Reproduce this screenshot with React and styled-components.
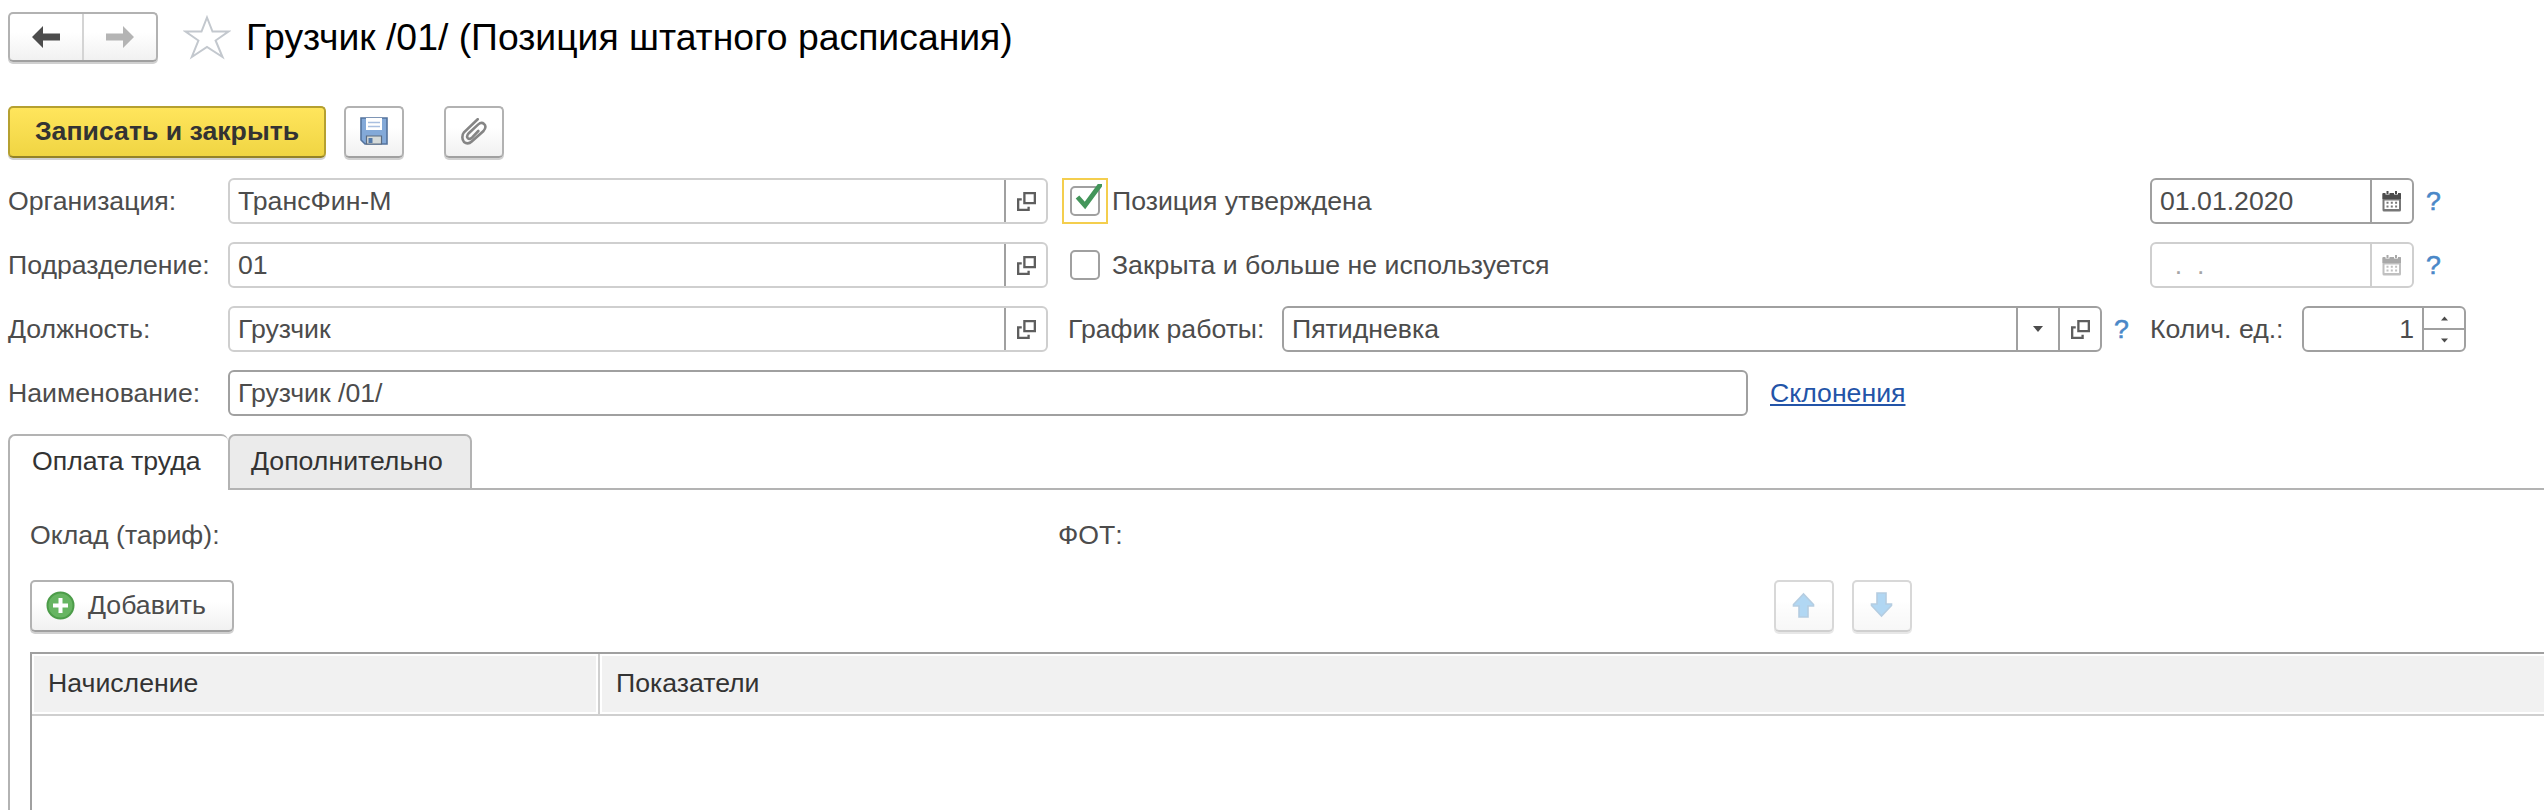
import React from 'react';
import styled, { createGlobalStyle, css } from 'styled-components';

const Global = createGlobalStyle`
  * { box-sizing: border-box; }
  body { margin: 0; background: #fff; overflow: hidden; }
`;

const Page = styled.div`
  width: 2544px;
  height: 810px;
  display: flex;
  flex-direction: column;
  padding: 12px 0 0 8px;
  overflow: hidden;
  font-family: 'Liberation Sans', Arial, sans-serif;
  font-size: 26.667px;
  line-height: 46px;
  color: #4c4c4c;
  white-space: nowrap;
`;

const TitleBar = styled.header`
  display: flex;
  height: 94px;
  align-items: flex-start;
`;

const raised = css`
  border: 2px solid #b2b2b2;
  border-bottom-color: #a0a0a0;
  border-radius: 5px;
  background: linear-gradient(#fff 40%, #f1f1f1);
  box-shadow: 0 2px 0 #d0d0d0;
`;

const NavGroup = styled.div`
  ${raised}
  display: flex;
  width: 150px;
  height: 50px;
`;

const NavButton = styled.button`
  flex: 1;
  display: flex;
  align-items: center;
  justify-content: center;
  border: 0;
  padding: 0;
  background: none;
  & + & { border-left: 2px solid #d4d4d4; }
`;

const StarBox = styled.div`
  display: flex;
  margin: 2px 0 0 25px;
`;

const Title = styled.h1`
  margin: 0 0 0 15px;
  font-size: 37.333px;
  line-height: 50px;
  font-weight: 400;
  color: #000;
`;

const Toolbar = styled.div`
  display: flex;
  height: 72px;
  align-items: flex-start;
`;

const Button = styled.button`
  ${raised}
  display: flex;
  align-items: center;
  justify-content: center;
  width: ${(p) => p.$w}px;
  height: 52px;
  margin: 0 0 0 ${(p) => p.$gap || 0}px;
  padding: 0 0 2px;
  font: inherit;
  color: inherit;
  opacity: ${(p) => (p.$disabled ? 0.5 : 1)};
`;

const PrimaryButton = styled(Button)`
  border-color: #b5a030;
  border-bottom-color: #938228;
  background: linear-gradient(#ffe55c, #f0d543);
  font-weight: 700;
  color: #333;
`;

const AddButton = styled(Button)`
  justify-content: flex-start;
  gap: 13px;
  padding-left: 14px;
`;

const Form = styled.div`
  display: flex;
  flex-direction: column;
  gap: 18px;
  height: 256px;
`;

const Row = styled.div`
  display: flex;
  height: 46px;
`;

const Label = styled.label`
  width: ${(p) => p.$w}px;
  height: 46px;
  flex: none;
`;

const ScheduleLabel = styled(Label)`
  margin-left: 20px;
`;

const Field = styled.div`
  display: flex;
  flex: none;
  width: ${(p) => p.$w}px;
  height: 46px;
  border: 2px solid ${(p) => (p.$light ? '#cfcfcf' : '#a0a0a0')};
  border-radius: 6px;
`;

const Value = styled.div`
  flex: 1;
  padding: 0 8px;
  line-height: 42px;
  text-align: ${(p) => p.$align || 'left'};
  color: ${(p) => (p.$muted ? '#a5a5a5' : '#4c4c4c')};
  white-space: pre;
`;

const FieldButton = styled.div`
  display: flex;
  align-items: center;
  justify-content: center;
  width: 42px;
  border-left: 2px solid ${(p) => (p.$light ? '#cfcfcf' : '#a0a0a0')};
  color: ${(p) => (p.$light ? '#a8a8a8' : '#4c4c4c')};
`;

const Spinner = styled(FieldButton)`
  flex-direction: column;
  align-items: stretch;
`;

const SpinStep = styled.div`
  flex: 1;
  display: flex;
  align-items: center;
  justify-content: center;
  & + & { border-top: 2px solid #a0a0a0; }
`;

const CheckFrame = styled.div`
  display: flex;
  width: 46px;
  height: 46px;
  margin-left: 14px;
  padding: 6px;
  border: 2px solid ${(p) => (p.$focused ? '#f4ce4e' : 'transparent')};
`;

const CheckBox = styled.div`
  display: flex;
  width: 30px;
  height: 30px;
  border: 2px solid #a0a0a0;
  border-radius: 5px;
`;

const CheckSvg = styled.svg`
  flex: none;
  margin: -4px 0 0 2px;
`;

const CheckLabel = styled.label`
  width: 1042px;
  padding-left: 4px;
`;

const Help = styled.span`
  width: 48px;
  padding-left: 12px;
  color: #4a88c8;
  -webkit-text-stroke: 0.6px #4a88c8;
`;

const Link = styled.a`
  margin-left: 22px;
  color: #2354a8;
  text-decoration: underline;
  text-decoration-thickness: 2px;
  text-underline-offset: 2px;
`;

const Tabs = styled.nav`
  display: flex;
  height: 56px;
  color: #333;
  line-height: 50px;
`;

const Tab = styled.div`
  width: ${(p) => p.$w}px;
  padding-left: ${(p) => p.$pad}px;
  border: 2px solid #b3b3b3;
  border-radius: 7px 7px 0 0;
  background: ${(p) => (p.$active ? '#fff' : '#ebebeb')};
  ${(p) => p.$active && css`border-right: 0; border-bottom: 0;`}
`;

const TabRest = styled.div`
  flex: 1;
  border-bottom: 2px solid #b3b3b3;
`;

const Panel = styled.section`
  flex: 1;
  display: flex;
  flex-direction: column;
  border-left: 2px solid #b3b3b3;
  padding: 22px 0 0 20px;
`;

const Totals = styled.div`
  display: flex;
  height: 68px;
`;

const Commands = styled.div`
  display: flex;
  height: 72px;
`;

const Table = styled.div`
  flex: 1;
  border: solid #a0a0a0;
  border-width: 2px 0 0 2px;
  color: #333;
`;

const HeadRow = styled.div`
  display: flex;
  height: 62px;
  border-bottom: 2px solid #cfcfcf;
`;

const HeadCell = styled.div`
  width: ${(p) => p.$w}px;
  padding-left: 14px;
  line-height: 54px;
  border: 2px solid #fff;
  background: #f1f1f1;
`;

const HeadDivider = styled.div`
  width: 2px;
  background: #cfcfcf;
`;

const LastHeadCell = styled(HeadCell)`
  flex: 1;
  border-right: 0;
`;

const Arrow = ({ color, flip }) => (
  <svg width="28" height="22" viewBox="0 0 28 22">
    <path d={flip ? 'M28 11 17 0v7.5H0v7h17V22z' : 'M0 11 11 0v7.5h17v7H11V22z'} fill={color} />
  </svg>
);

const Star = () => (
  <svg width="48" height="46" viewBox="0 0 48 46">
    <path d="M24 3.500 29.500 17.500H45.500L32.600 26.500 39.500 43 24 33 8.800 43 15.400 26.500 2.500 17.500H18.500z" fill="none" stroke="#c3c8ce" strokeWidth="2" />
  </svg>
);

const Floppy = () => (
  <svg width="28" height="28" viewBox="0 0 28 28">
    <path d="M1 1h26v26H5l-4-4z" fill="#83a9d8" stroke="#54739d" strokeWidth="1.6" />
    <path d="M6 1h16v12H6z" fill="#fff" />
    <path d="M8 5.5h12M8 9.5h12" stroke="#a9bfe0" strokeWidth="1.5" />
    <path d="M6.500 19h15v8h-15z" fill="#d5dad9" stroke="#5c6c80" strokeWidth="1.2" />
    <path d="M8.5 21h4v5h-4z" fill="#5379a9" />
  </svg>
);

const Clip = () => (
  <svg width="26" height="27" viewBox="0 0 26 27" fill="none" stroke="#858585" strokeWidth="2.600" strokeLinecap="round">
    <path d="M16.700 1.200 3 14.300C.8 17 .8 21.500 3 24c2.500 2 5.500 1.600 8-.8L22.500 13c2.500-2.800 2.400-5.500.6-7-1.800-1.600-4.300-1-6.100.6L7.800 15.200c-1.900 2-1.900 4-.9 5 1.200 1.100 2.900.6 4.300-.8L17.300 13" />
  </svg>
);

const OpenIcon = () => (
  <svg width="19" height="19" viewBox="0 0 18 18" fill="none" stroke="#5e5e5e" strokeWidth="2.200">
    <path d="M7 1.100h9.900v9.400H7zM4.500 7H1.100v9.900h9.900v-3" />
  </svg>
);

const CalendarIcon = ({ muted }) => (
  <svg width="20" height="22" viewBox="0 0 20 22">
    <path d="M1.500 3h16.500q1 0 1 1v16q0 1.500-1.500 1.500H2q-1.500 0-1.500-1.500V4q0-1 1-1z" fill={muted ? '#c0c0c0' : '#777'} />
    <path d="M.5 9V4q0-1 1-1H18q1 0 1 1v5z" fill="currentColor" />
    <path d="M2.500 10.500h14.500v8.500H2.500z" fill="#fff" />
    <path d="M4.500 12.800h11M4.500 16.500h11" stroke={muted ? '#c0c0c0' : '#777'} strokeWidth="2" strokeDasharray="2 2.300" />
    <path d="M5.500 0v4.500M14 0v4.500" stroke="#fff" strokeWidth="4" />
    <path d="M5.500 1v3M14 1v3" stroke="currentColor" strokeWidth="2" />
  </svg>
);

const Triangle = ({ w, h, up }) => (
  <svg width={w} height={h} viewBox="0 0 10 6">
    <path d={up ? 'M0 6 5 0l5 6z' : 'M0 0h10L5 6z'} fill="#4c4c4c" />
  </svg>
);

const Plus = () => (
  <svg width="29" height="29" viewBox="0 0 29 29">
    <circle cx="14.500" cy="14.500" r="13" fill="#67b562" stroke="#4c9c49" strokeWidth="2" />
    <path d="M14.500 7v15M7 14.500h15" stroke="#fff" strokeWidth="4" />
  </svg>
);

const BlueArrow = ({ down }) => (
  <svg width="24" height="26" viewBox="0 0 24 26">
    <path
      d={down ? 'M7 1h9v11h5.500v1.500L11.500 24 1.500 13.500V12H7z' : 'M7 25h9V14h5.500v-1.500L11.500 2 1.500 12.500V14H7z'}
      fill="#65b1e8"
      stroke="#6d9cc4"
      strokeWidth="1.600"
    />
  </svg>
);

const MoveButton = styled(Button)`
  margin-left: ${(p) => (p.$first ? 1540 : 18)}px;
`;

const RefField = ({ value }) => (
  <Field $w={820} $light>
    <Value>{value}</Value>
    <FieldButton><OpenIcon /></FieldButton>
  </Field>
);

export default function App() {
  return (
    <Page>
      <Global />
      <TitleBar>
        <NavGroup>
          <NavButton><Arrow color="#4c4c4c" /></NavButton>
          <NavButton><Arrow color="#b4b4b4" flip /></NavButton>
        </NavGroup>
        <StarBox><Star /></StarBox>
        <Title>Грузчик /01/ (Позиция штатного расписания)</Title>
      </TitleBar>
      <Toolbar>
        <PrimaryButton $w={318}>Записать и закрыть</PrimaryButton>
        <Button $w={60} $gap={18}><Floppy /></Button>
        <Button $w={60} $gap={40}><Clip /></Button>
      </Toolbar>
      <Form>
        <Row>
          <Label $w={220}>Организация:</Label>
          <RefField value="ТрансФин-М" />
          <CheckFrame $focused>
            <CheckBox>
              <CheckSvg width="28" height="28" viewBox="0 0 28 28">
                <path d="M3.500 13 11 21.500 27.500-1" fill="none" stroke="#43955a" strokeWidth="4.800" />
              </CheckSvg>
            </CheckBox>
          </CheckFrame>
          <CheckLabel>Позиция утверждена</CheckLabel>
          <Field $w={264}>
            <Value>01.01.2020</Value>
            <FieldButton><CalendarIcon /></FieldButton>
          </Field>
          <Help>?</Help>
        </Row>
        <Row>
          <Label $w={220}>Подразделение:</Label>
          <RefField value="01" />
          <CheckFrame><CheckBox /></CheckFrame>
          <CheckLabel>Закрыта и больше не используется</CheckLabel>
          <Field $w={264} $light>
            <Value $muted>{'  .  .'}</Value>
            <FieldButton $light><CalendarIcon muted /></FieldButton>
          </Field>
          <Help>?</Help>
        </Row>
        <Row>
          <Label $w={220}>Должность:</Label>
          <RefField value="Грузчик" />
          <ScheduleLabel $w={214}>График работы:</ScheduleLabel>
          <Field $w={820}>
            <Value>Пятидневка</Value>
            <FieldButton><Triangle w={10} h={6} /></FieldButton>
            <FieldButton><OpenIcon /></FieldButton>
          </Field>
          <Help>?</Help>
          <Label $w={152}>Колич. ед.:</Label>
          <Field $w={164}>
            <Value $align="right">1</Value>
            <Spinner>
              <SpinStep><Triangle w={7} h={5} up /></SpinStep>
              <SpinStep><Triangle w={7} h={5} /></SpinStep>
            </Spinner>
          </Field>
        </Row>
        <Row>
          <Label $w={220}>Наименование:</Label>
          <Field $w={1520}><Value>Грузчик /01/</Value></Field>
          <Link>Склонения</Link>
        </Row>
      </Form>
      <Tabs>
        <Tab $w={220} $pad={22} $active>Оплата труда</Tab>
        <Tab $w={244} $pad={21}>Дополнительно</Tab>
        <TabRest />
      </Tabs>
      <Panel>
        <Totals>
          <Label $w={1028}>Оклад (тариф):</Label>
          <Label>ФОТ:</Label>
        </Totals>
        <Commands>
          <AddButton $w={204}><Plus />Добавить</AddButton>
          <MoveButton $w={60} $first $disabled><BlueArrow /></MoveButton>
          <MoveButton $w={60} $disabled><BlueArrow down /></MoveButton>
        </Commands>
        <Table>
          <HeadRow>
            <HeadCell $w={566}>Начисление</HeadCell>
            <HeadDivider />
            <LastHeadCell>Показатели</LastHeadCell>
          </HeadRow>
        </Table>
      </Panel>
    </Page>
  );
}
